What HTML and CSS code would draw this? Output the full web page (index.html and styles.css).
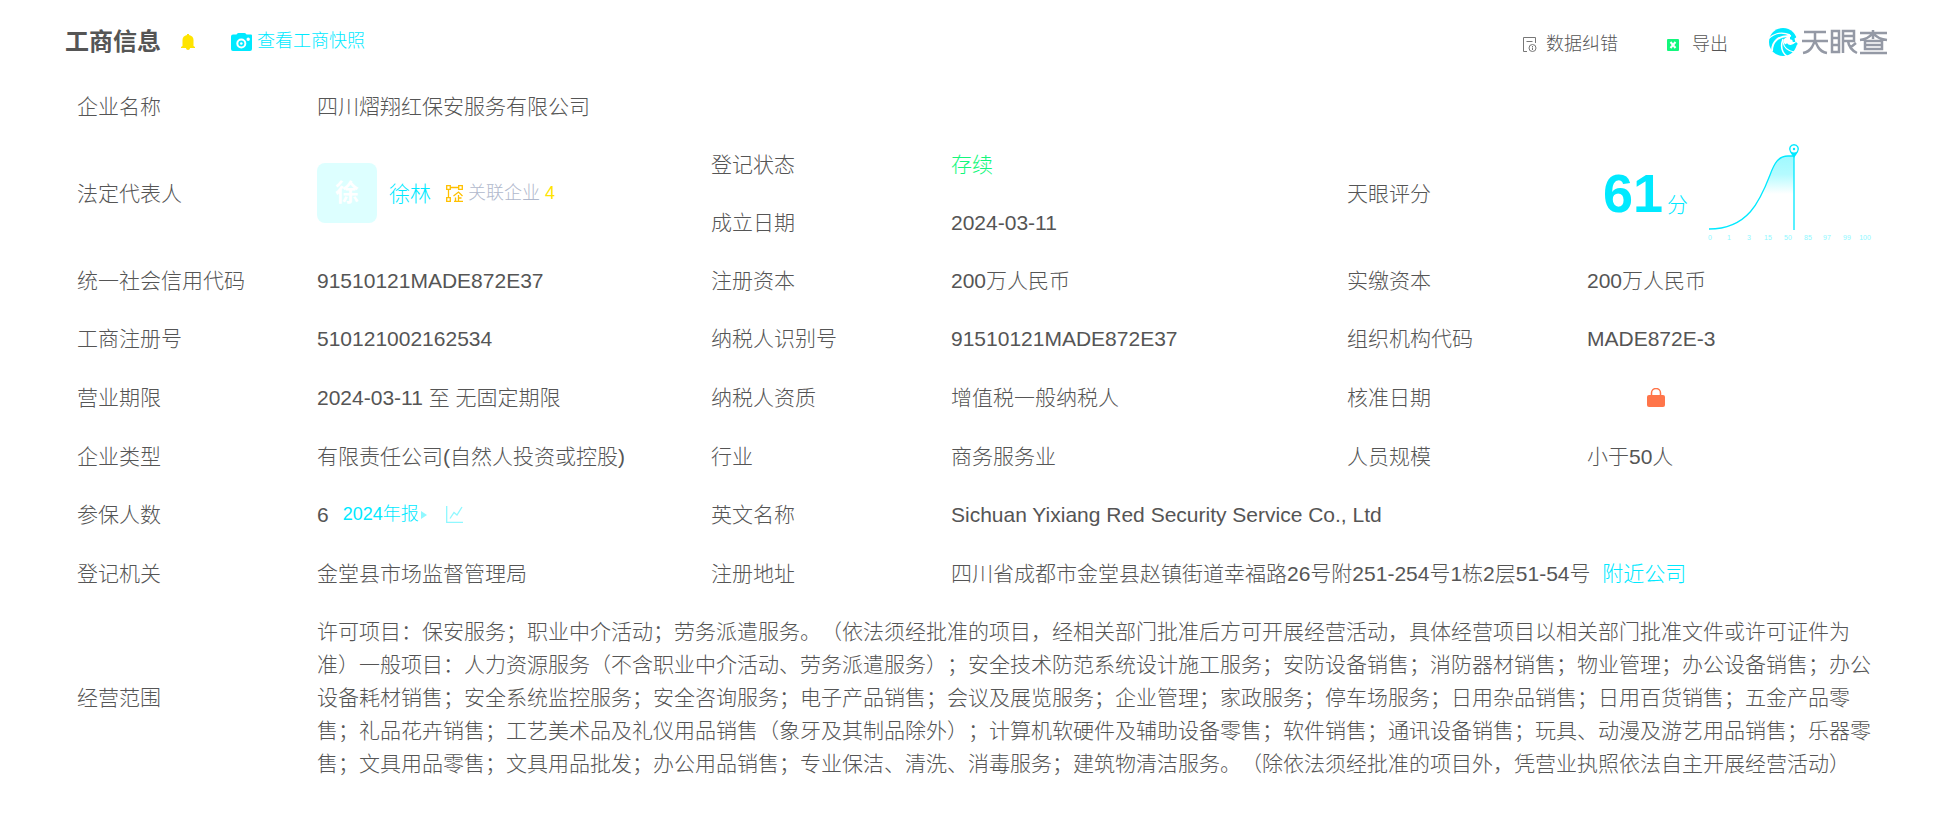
FILE: index.html
```html
<!DOCTYPE html>
<html lang="zh-CN">
<head>
  <meta charset="UTF-8">
  <title>工商信息</title>
  <link rel="stylesheet" href="styles.css">
</head>
<body>
  <div class="panel">
    <div class="header">
      <h2 class="title">工商信息</h2>
      <svg class="bell" width="14" height="16" viewBox="0 0 14 16">
        <path fill="#ffe400" d="M6 0h2v1c3 .5 4.500 2.500 4.500 5v6l1.500 1v1H9c0 1-1 2-2 2s-2-1-2-2H0v-1l1.500-1V6C1.500 3.500 3 1.500 6 1z"/>
      </svg>
      <a href="#" class="snapshot">
        <svg width="21" height="18" viewBox="0 0 21 18">
          <path fill="#00e9ff" fill-rule="evenodd" d="M5.500 1.500Q6 0 7.500 0h6q1.500 0 2 1.500H20q1 0 1 1V16q0 2-2 2H2q-2 0-2-2V3.500q0-2 2-2zM10.300 5.500a5 5 0 1 0 0 10 5 5 0 0 0 0-10zM17.200 4.500a1.700 1.700 0 1 0 0 3.400 1.700 1.700 0 0 0 0-3.400z"/>
          <circle cx="10.300" cy="10.500" r="3" fill="#00e9ff"/>
          <circle cx="10.300" cy="10.500" r="1.300" fill="#fff"/>
        </svg>
        查看工商快照
      </a>
      <div class="tools">
        <a href="#" class="tool report">
          <svg width="14" height="16" viewBox="0 0 14 16" fill="none" stroke="#777" stroke-width="1">
            <path d="M12.500 6V.500H.500v14H4M3.500 4.500h6"/>
            <circle cx="9.500" cy="11" r="3.500"/>
            <path d="M9.500 9v1M9.500 10.500v2.500"/>
          </svg>
          数据纠错
        </a>
        <a href="#" class="tool export">
          <svg width="12" height="12" viewBox="0 0 12 12">
            <rect width="12" height="12" rx="1" fill="#13f77c"/>
            <path d="M3.500 3l5 6M8.500 3l-5 6" stroke="#fff" stroke-width="2"/>
          </svg>
          导出
        </a>
        <svg class="logo" width="120" height="30" viewBox="0 0 120 30" role="img" aria-label="天眼查">
          <circle cx="15" cy="15" r="14" fill="#00e9ff"/>
          <g fill="none" stroke="#fff">
            <path stroke-width="1.500" d="M0 12C5 7 13 4 22 8"/>
            <path stroke-width="2" d="M4 24C4 15 10 8 23 9"/>
            <path stroke-width="1.500" d="M20 30C14 26 12 20 15 12"/>
            <path stroke-width="1.200" d="M26 25C20 24 16 21 15 15"/>
          </g>
          <path fill="#fff" d="M15 14c2-5 8-6 11-2l4-3v7c-2 2-4 3-7 3-4 0-7-2-8-5z"/>
          <path fill="none" stroke="#00e9ff" stroke-width="2.500" d="M18 17c2 3 7 3 11-1M22 11c3 0 4 2 4 4"/>
          <g fill="none" stroke="#9499a5" stroke-width="2.500">
            <path d="M36 5h22M34 14h26M47 5v9L44 20q-3 5-9 6M47 14l3 6q3 5 9 6"/>
            <path d="M64 4h7v21h-7zM64 11h7M64 18h7M75 26V4h11v10H75M75 9h11M80 14q1 8 9 12M88 16l-5 4"/>
            <path d="M92 6h27M105 3v9M104 7q-4 5-12 6M106 7q4 5 13 6M97 14h17v8H97zM97 18h17M92 26h27"/>
          </g>
        </svg>
      </div>
    </div>

    <table class="info">
      <colgroup>
        <col class="col-label"><col class="col-value">
        <col class="col-label"><col class="col-value-wide">
        <col class="col-label"><col>
      </colgroup>
      <tr>
        <th>企业名称</th>
        <td colspan="5">四川熠翔红保安服务有限公司</td>
      </tr>
      <tr>
        <th rowspan="2">法定代表人</th>
        <td rowspan="2">
          <div class="person">
            <span class="avatar">徐</span>
            <a href="#" class="name">徐林</a>
            <a href="#" class="related">
              <svg width="17" height="17" viewBox="0 0 17 17" fill="none" stroke="#ffc000" stroke-width="1.300">
                <path d="M.700.700h3.600v3.600H.700zM12.700.700h3.600v3.600h-3.600zM.700 12.700h3.600v3.600H.700zM4.300 2.500h8.400M2.500 4.300v8.400"/>
                <path d="M7.500 11l5-4 4 4M8 16.300h9M12.500 10v6M9.500 12.500v3.500M12.500 13h3"/>
              </svg>
              关联企业 <em>4</em>
            </a>
          </div>
        </td>
        <th>登记状态</th>
        <td class="status">存续</td>
        <th rowspan="2">天眼评分</th>
        <td rowspan="2" class="score-cell">
          <div class="score">
            <div class="result">
              <span class="points">61</span><span class="unit">分</span>
            </div>
            <svg class="curve" width="170" height="98" viewBox="0 0 170 98">
              <defs>
                <linearGradient id="fade" x1="0" y1="0" x2="0" y2="1">
                  <stop offset="0" stop-color="#9ff9ff"/>
                  <stop offset="0.250" stop-color="#b4fbff"/>
                  <stop offset="0.520" stop-color="#fff"/>
                </linearGradient>
              </defs>
              <path fill="url(#fade)" d="M1 85C40 85 52 57 62 31C66 20 70 12 80 12H86V85z"/>
              <path fill="none" stroke="#00e9ff" stroke-width="1.300" d="M1 85C40 85 52 57 62 31C66 20 70 12 80 12H86V86"/>
              <path fill="#00e9ff" fill-rule="evenodd" d="M86 0a5 5 0 0 1 4 8l-4 6-4-6a5 5 0 0 1 4-8zM86 1.500a3.500 3.500 0 1 0 0 7 3.500 3.500 0 0 0 0-7z"/>
              <circle cx="86" cy="5" r="1.200" fill="#00e9ff"/>
              <g class="ticks">
                <text x="2" y="96">0</text>
                <text x="21" y="96">1</text>
                <text x="41" y="96">3</text>
                <text x="60" y="96">15</text>
                <text x="80" y="96">50</text>
                <text x="100" y="96">85</text>
                <text x="119" y="96">97</text>
                <text x="139" y="96">99</text>
                <text x="157" y="96">100</text>
              </g>
            </svg>
          </div>
        </td>
      </tr>
      <tr>
        <th>成立日期</th>
        <td>2024-03-11</td>
      </tr>
      <tr>
        <th>统一社会信用代码</th>
        <td>91510121MADE872E37</td>
        <th>注册资本</th>
        <td>200万人民币</td>
        <th>实缴资本</th>
        <td>200万人民币</td>
      </tr>
      <tr class="tall">
        <th>工商注册号</th>
        <td>510121002162534</td>
        <th>纳税人识别号</th>
        <td>91510121MADE872E37</td>
        <th>组织机构代码</th>
        <td>MADE872E-3</td>
      </tr>
      <tr class="tall">
        <th>营业期限</th>
        <td>2024-03-11 至 无固定期限</td>
        <th>纳税人资质</th>
        <td>增值税一般纳税人</td>
        <th>核准日期</th>
        <td>
          <a href="#" class="lock" aria-label="核准日期">
            <svg width="18" height="20" viewBox="0 0 18 20">
              <rect y="7" width="18" height="12" rx="2" fill="#ff754a"/>
              <path fill="none" stroke="#ff754a" stroke-width="1.500" d="M4.500 8V5a4.500 4.500 0 0 1 9 0v3"/>
            </svg>
          </a>
        </td>
      </tr>
      <tr>
        <th>企业类型</th>
        <td>有限责任公司(自然人投资或控股)</td>
        <th>行业</th>
        <td>商务服务业</td>
        <th>人员规模</th>
        <td>小于50人</td>
      </tr>
      <tr class="tall">
        <th>参保人数</th>
        <td>
          <div class="insured">
            6
            <a href="#" class="annual">2024年报<svg width="6" height="8" viewBox="0 0 6 8"><path fill="#8ff8ff" d="M0 0l6 4-6 4z"/></svg></a>
            <svg class="trend" width="17" height="17" viewBox="0 0 17 17" fill="none" stroke="#8ff8ff" stroke-width="1.300">
              <path d="M.700 0v16.300H17M4 12.500l4-6 3 2.500 5-8"/>
            </svg>
          </div>
        </td>
        <th>英文名称</th>
        <td colspan="3">Sichuan Yixiang Red Security Service Co., Ltd</td>
      </tr>
      <tr class="tall">
        <th>登记机关</th>
        <td>金堂县市场监督管理局</td>
        <th>注册地址</th>
        <td colspan="3">四川省成都市金堂县赵镇街道幸福路26号附251-254号1栋2层51-54号 <a href="#" class="nearby">附近公司</a></td>
      </tr>
      <tr>
        <th>经营范围</th>
        <td colspan="5">许可项目：保安服务；职业中介活动；劳务派遣服务。（依法须经批准的项目，经相关部门批准后方可开展经营活动，具体经营项目以相关部门批准文件或许可证件为准）一般项目：人力资源服务（不含职业中介活动、劳务派遣服务）；安全技术防范系统设计施工服务；安防设备销售；消防器材销售；物业管理；办公设备销售；办公设备耗材销售；安全系统监控服务；安全咨询服务；电子产品销售；会议及展览服务；企业管理；家政服务；停车场服务；日用杂品销售；日用百货销售；五金产品零售；礼品花卉销售；工艺美术品及礼仪用品销售（象牙及其制品除外）；计算机软硬件及辅助设备零售；软件销售；通讯设备销售；玩具、动漫及游艺用品销售；乐器零售；文具用品零售；文具用品批发；办公用品销售；专业保洁、清洗、消毒服务；建筑物清洁服务。（除依法须经批准的项目外，凭营业执照依法自主开展经营活动）</td>
      </tr>
    </table>
  </div>
</body>
</html>
```
FILE: styles.css
```css
body {
  margin: 0;
  background: #fff;
  color: #555;
  font-family: "Liberation Sans", "Noto Sans CJK SC", sans-serif;
  font-size: 21px;
  font-weight: 300;
  line-height: 33px;
  text-spacing-trim: space-all; /* keep full-width punctuation full width */
}
a {
  color: #00e9ff;
  text-decoration: none;
}
svg {
  display: block;
  flex: none;
}
.panel {
  padding: 6px 65px 28px;
}
.header {
  display: flex;
  align-items: center;
  height: 71px;
}
.title {
  margin: 0;
  font-size: 24px;
  font-weight: bold;
}
.bell {
  margin-left: 20px;
}
.snapshot {
  display: flex;
  align-items: center;
  gap: 5px;
  margin-left: 36px;
  font-size: 18px;
}
.tools {
  display: flex;
  align-items: center;
  margin-left: auto;
}
.tool {
  display: flex;
  align-items: center;
  gap: 9px;
  padding-top: 6px;
  color: #555;
  font-size: 18px;
}
.export {
  gap: 13px;
  margin-left: 49px;
}
.logo {
  margin-right: 2px;
  margin-left: 40px;
}
.info {
  width: 100%;
  table-layout: fixed;
  border-collapse: collapse;
}
.col-label {
  width: 240px;
}
.col-value {
  width: 394px;
}
.col-value-wide {
  width: 396px;
}
th,
td {
  height: 34px;
  padding: 12px;
  text-align: left;
  font-weight: 300;
}
.tall td,
.tall th {
  height: 35px;
}
.info .status {
  color: #13f77c;
}
.person {
  display: flex;
  align-items: center;
}
.avatar {
  width: 60px;
  border-radius: 8px;
  background: #dff;
  color: #fff;
  font-size: 24px;
  font-weight: bold;
  line-height: 60px;
  text-align: center;
}
.name {
  margin-left: 12px;
}
.related {
  display: flex;
  align-items: center;
  gap: 5px;
  margin-left: 15px;
  color: #b0b8cc;
  font-size: 18px;
}
.related em {
  color: #ffe400;
  font-style: normal;
}
.info .score-cell {
  padding: 0 12px;
}
.score {
  display: flex;
  align-items: center;
  color: #00e9ff;
}
.result {
  display: flex;
  align-items: baseline;
}
.points {
  margin-left: 16px;
  font-size: 54px;
  font-weight: bold;
  line-height: 60px;
}
.unit {
  margin-left: 4px;
}
.curve {
  margin-left: 20px;
}
.ticks {
  fill: #8ff8ff;
  font-size: 7px;
  text-anchor: middle;
}
.lock {
  display: block;
  width: 18px;
  margin-left: 60px;
}
.insured {
  display: flex;
  align-items: center;
}
.annual {
  display: flex;
  align-items: center;
  gap: 2px;
  margin-left: 14px;
  font-size: 18px;
}
.trend {
  margin-left: 19px;
}
.nearby {
  margin-left: 6px;
}
```
